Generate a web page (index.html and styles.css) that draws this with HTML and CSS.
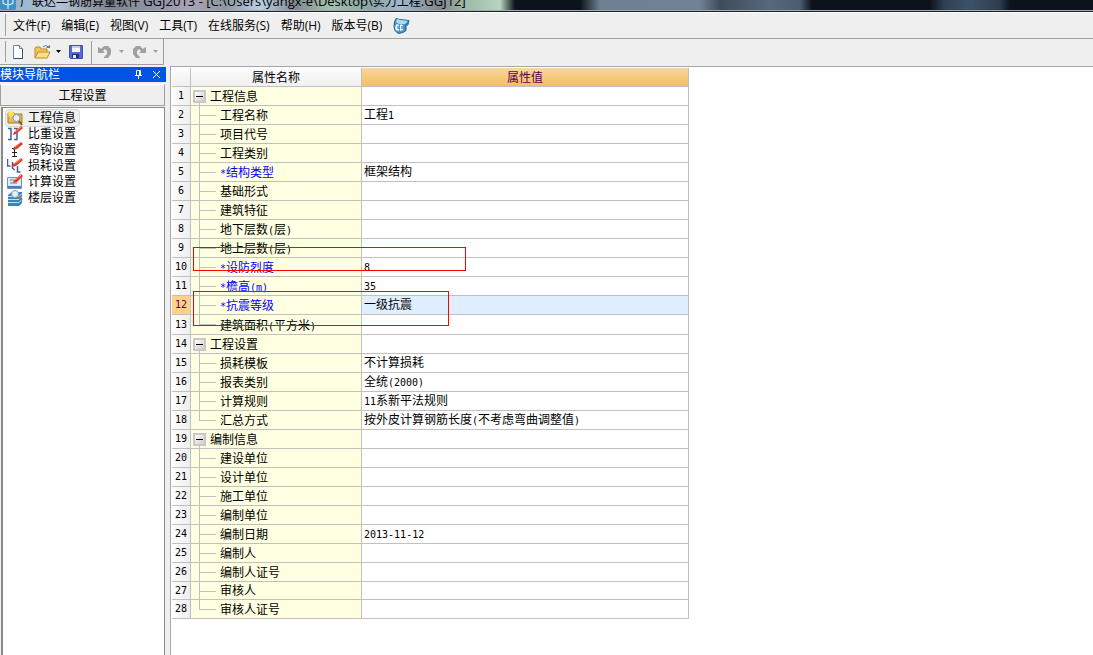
FILE: index.html
```html
<!DOCTYPE html>
<html lang="zh-CN">
<head>
<meta charset="utf-8">
<title>广联达—钢筋算量软件 GGJ2013</title>
<link rel="stylesheet" href="styles.css">
</head>
<body>
<div class="app">
  <header class="titlebar">
    <svg class="logo" width="16" height="16" viewBox="0 0 16 16"><rect width="16" height="16" rx="2" fill="#3d8fc4"/><path d="M8 1v14M3 5h10v4q-5 4-10 0z" fill="none" stroke="#d8f0fb" stroke-width="1.2"/></svg>
    <span class="caption">广联达—钢筋算量软件 <span class="latin">GGJ2013 - [C:\Users\yangx-e\Desktop\</span>实力工程<span class="latin">.GGJ12]</span></span>
  </header>
  <nav class="menubar">
    <button>文件(F)</button><button>编辑(E)</button><button>视图(V)</button><button>工具(T)</button><button>在线服务(S)</button><button>帮助(H)</button><button>版本号(B)</button>
    <button class="mascot" aria-label="在线助手"><svg width="17" height="17" viewBox="0 0 17 17"><path d="M1.500 5 3 1.500l4 1 9 1-1 4-2 2v4l-3 2-5 1-3-3-1-4z" fill="#4696cf" stroke="#23628f"/><path d="m4 2 4 1 7 1-3 3H6L3 5z" fill="#a9dcf2"/><path d="M3 7.500q2-1 3 1v5q-3 1-4-2zM7 8q2-2 3 1v4l-3 1z" fill="#eef6fa"/><path d="M5 9v3M9 9v3" stroke="#345a78"/><path d="M12.500 8v5M15 5l-3 4" stroke="#2a6fa6"/></svg></button>
  </nav>
  <div class="toolrow">
    <div class="toolbar">
      <button class="new" aria-label="新建"><svg width="16" height="16" viewBox="0 0 16 16"><path d="M3.500 1.500h6l3 3v10h-9z" fill="#fdfeff" stroke="#7085a5"/><path d="M12.500 5v9.500h-9" fill="none" stroke="#344e75"/><path d="M9.500 1.500v3h3" fill="#d6e2f1" stroke="#7085a5"/></svg></button>
      <button class="open" aria-label="打开"><svg width="17" height="16" viewBox="0 0 17 16"><path d="M1 14V4l1-1h4l1 2h6v3" fill="#f2c65a" stroke="#b98a26"/><path d="M1 14 4 8h12l-3 6z" fill="#fbe08a" stroke="#bd8c25"/><path d="M9 3q3-3 5 0" fill="none" stroke="#58769a"/><path d="M12 4h4V1z" fill="#58769a"/></svg></button>
      <button class="drop" aria-label="打开选项"><svg width="5" height="3"><path d="M0 0h5L2.500 3z"/></svg></button>
      <button class="save" aria-label="保存"><svg width="16" height="16" viewBox="0 0 16 16"><path d="M1.500 1.500h13v13h-12l-1-1z" fill="#5868d6" stroke="#4351b4"/><path d="M4 2h8v6H4z" fill="#f4f7ff"/><path d="M4 2h8v2H4z" fill="#c1ccf1"/><path d="M4 10h7v4H4z" fill="#28316e"/><path d="M5 11h3v3H5z" fill="#e9ecf9"/></svg></button>
      <span class="rule"></span>
      <button class="undo" aria-label="撤销"><svg width="14" height="14" viewBox="0 0 14 14"><path d="M0 2l2 1 1 1 3-3h4l3 3v5l-3 4H6v-1l3-3V6L7 4 5 6l2 2H0z" fill="#a0a0a0"/></svg></button>
      <button class="drop" aria-label="撤销选项"><svg width="5" height="3"><path d="M0 0h5L2.500 3z" fill="#a0a0a0"/></svg></button>
      <button class="redo" aria-label="重做"><svg width="14" height="14" viewBox="0 0 14 14"><path d="M14 2l-2 1-1 1-3-3H4L1 4v5l3 4h4v-1L5 9V6l2-2 2 2-2 2h7z" fill="#a0a0a0"/></svg></button>
      <button class="drop" aria-label="重做选项"><svg width="5" height="3"><path d="M0 0h5L2.500 3z" fill="#a0a0a0"/></svg></button>
    </div>
  </div>
  <div class="body">
    <aside class="side">
      <div class="sidehead"><h2>模块导航栏</h2>
        <button aria-label="固定"><svg width="9" height="9" viewBox="0 0 9 9"><path d="M2.500 5V.5h4V5M1 5.500h7M4.500 6v3M5.500 1v4" fill="none" stroke="#fff"/></svg></button>
        <button aria-label="关闭"><svg width="9" height="9" viewBox="0 0 9 9"><path d="m1 1 7 7M8 1 1 8" stroke="#fff"/></svg></button>
      </div>
      <button class="group">工程设置</button>
      <ul class="list">
        <li><a href="#info" class="current"><svg width="16" height="16" viewBox="0 0 16 16"><path d="M1 3h6l1 1h7v9H1z" fill="#efbd4b" stroke="#a77822"/><path d="m4 0 1 2 2-1-1 2 2 1-2 1 1 2-2-1-1 2-1-2-2 1 1-2-2-1 2-1-1-2 2 1z" fill="#ffe45c"/><circle cx="9.500" cy="8" r="3.500" fill="#e6f2fc" stroke="#8098b5"/><path d="m12 11 3 4" stroke="#74511c" stroke-width="2"/></svg>工程信息</a></li>
        <li><a href="#weight"><svg width="16" height="16" viewBox="0 0 16 16"><path d="M1 2.500h3v11H1M7 2.500h3v11H7" fill="none" stroke="#3d5f99" stroke-width="1.500"/><path d="m6 9 1-3 7-6 2 2-7 6z" fill="#df3b27"/><path d="m8 6 6-5" stroke="#ff9d7b"/></svg>比重设置</a></li>
        <li><a href="#hook"><svg width="16" height="16" viewBox="0 0 16 16"><path d="M5 6.500h5M7.500 6v9M5 10.500h5M5 14.500h5" stroke="#222"/><path d="m6 8 1-3 7-5 2 2-6 5z" fill="#df3b27"/><path d="m8 5 5-4" stroke="#ff9d7b"/></svg>弯钩设置</a></li>
        <li><a href="#loss"><svg width="16" height="16" viewBox="0 0 16 16"><path d="M.5 1v7h3M5.500 4v6l2 2M10.500 8v6h3" fill="none" stroke="#3d5f99" stroke-width="1.500"/><path d="m5 9 1-3 8-6 2 2-7 6z" fill="#df3b27"/><path d="m7 6 7-5" stroke="#ff9d7b"/></svg>损耗设置</a></li>
        <li><a href="#calc"><svg width="16" height="16" viewBox="0 0 16 16"><path d="M.5 3.500h14v11H.5z" fill="#dceafa" stroke="#6e94c7"/><path d="M1 13h13" stroke="#487cbd" stroke-width="2"/><path d="M3 6h4M3 9h7" stroke="#5f84b6"/><path d="m6 9 1-3 7-6 2 2-6 6z" fill="#df3b27"/><path d="m8 6 6-5" stroke="#ff9d7b"/></svg>计算设置</a></li>
        <li><a href="#floor"><svg width="16" height="16" viewBox="0 0 16 16"><path d="m1 5 4-3h10v11l-3 3H1z" fill="#3587c4"/><path d="M1 6.500h11l3-3M1 9.500h11l3-3M1 12.500h11l3-3" fill="none" stroke="#bce4f8"/><circle cx="8" cy="4" r="3.500" fill="#e8eff5" stroke="#8a9aac"/><path d="m11 7 4 3" stroke="#9c7337" stroke-width="2"/></svg>楼层设置</a></li>
      </ul>
    </aside>
    <main class="main">
      <table class="grid">
        <colgroup><col class="c-num"><col class="c-name"><col class="c-value"></colgroup>
        <thead><tr><th></th><th>属性名称</th><th class="active">属性值</th></tr></thead>
        <tbody>
          <tr class="sec"><th>1</th><td><button aria-label="折叠"></button>工程信息</td><td></td></tr>
          <tr><th>2</th><td>工程名称</td><td>工程<span class="half">1</span></td></tr>
          <tr><th>3</th><td>项目代号</td><td></td></tr>
          <tr><th>4</th><td>工程类别</td><td></td></tr>
          <tr class="key"><th>5</th><td><span class="half">*</span>结构类型</td><td>框架结构</td></tr>
          <tr><th>6</th><td>基础形式</td><td></td></tr>
          <tr><th>7</th><td>建筑特征</td><td></td></tr>
          <tr><th>8</th><td>地下层数<span class="half">(</span>层<span class="half">)</span></td><td></td></tr>
          <tr><th>9</th><td>地上层数<span class="half">(</span>层<span class="half">)</span></td><td></td></tr>
          <tr class="key"><th>10</th><td><span class="half">*</span>设防烈度</td><td><span class="half">8</span><i class="mark mark-a"></i></td></tr>
          <tr class="key"><th>11</th><td><span class="half">*</span>檐高<span class="half">(m)</span></td><td><span class="half">35</span></td></tr>
          <tr class="key selected"><th>12</th><td><span class="half">*</span>抗震等级</td><td>一级抗震<i class="mark mark-b"></i></td></tr>
          <tr class="last tall"><th>13</th><td>建筑面积<span class="half">(</span>平方米<span class="half">)</span></td><td></td></tr>
          <tr class="sec"><th>14</th><td><button aria-label="折叠"></button>工程设置</td><td></td></tr>
          <tr><th>15</th><td>损耗模板</td><td>不计算损耗</td></tr>
          <tr><th>16</th><td>报表类别</td><td>全统<span class="half">(2000)</span></td></tr>
          <tr><th>17</th><td>计算规则</td><td><span class="half">11</span>系新平法规则</td></tr>
          <tr class="last"><th>18</th><td>汇总方式</td><td>按外皮计算钢筋长度<span class="half">(</span>不考虑弯曲调整值<span class="half">)</span></td></tr>
          <tr class="sec"><th>19</th><td><button aria-label="折叠"></button>编制信息</td><td></td></tr>
          <tr><th>20</th><td>建设单位</td><td></td></tr>
          <tr><th>21</th><td>设计单位</td><td></td></tr>
          <tr><th>22</th><td>施工单位</td><td></td></tr>
          <tr><th>23</th><td>编制单位</td><td></td></tr>
          <tr><th>24</th><td>编制日期</td><td><span class="half">2013-11-12</span></td></tr>
          <tr><th>25</th><td>编制人</td><td></td></tr>
          <tr><th>26</th><td>编制人证号</td><td></td></tr>
          <tr class="short"><th>27</th><td>审核人</td><td></td></tr>
          <tr class="last"><th>28</th><td>审核人证号</td><td></td></tr>
        </tbody>
      </table>
    </main>
  </div>
</div>
</body>
</html>
```

FILE: styles.css
```css
* { box-sizing: border-box; }
body { margin: 0; background: #efefef; color: #000; font: 12px/16px "Open Sans", "Noto Sans CJK SC", sans-serif; }
button { margin: 0; padding: 0; border: 0; background: none; color: inherit; font: inherit; display: flex; align-items: center; justify-content: center; }
svg { display: block; flex: none; }
.app { min-height: 100vh; display: flex; flex-direction: column; }

.titlebar { height: 13px; display: flex; align-items: flex-end; gap: 4px; overflow: hidden; white-space: nowrap; padding-bottom: 2px;
  border-bottom: 1px solid #fff; box-shadow: inset 0 -1px #18222c, inset 0 -2px #a4abb0;
  background: linear-gradient(90deg, #8fb0c8 0, #b4c3d4 60px, #7f868e 110px, #8b92a4 150px, #a9a3b4 190px, #8e979f 225px, #b9cfe4 260px, #81898f 295px, #9fc2ad 330px, #8ea3a5 370px, #9fb9d0 400px, #80868b 440px, #9fb9a8 465px, #b6d4c0 500px, #0c131c 515px, #0c131c 580px, #6e8092 600px, #6f8295 700px, #3f4c5b 720px, #56687b 770px, #4b5c6e 800px, #0c131c 812px, #0c131c 930px, #2f4255 945px, #3d5268 970px, #2b3c4e 1000px, #0c131c 1010px); }
.latin { font-size: 13px; }

.menubar { height: 26px; display: flex; align-items: center; gap: 11px; padding-left: 13px; border-bottom: 1px solid #a0a0a0; background: linear-gradient(#a0a0a0, #a0a0a0) 5px 1px / 1px 22px no-repeat; }

.toolrow { height: 26px; display: flex; }
.toolbar { width: 164px; display: flex; align-items: center; padding-left: 10px; border-right: 1px solid #a0a0a0; border-bottom: 1px solid #a0a0a0; background: linear-gradient(#a0a0a0, #a0a0a0) 5px 2px / 1px 21px no-repeat; }
.open { margin-left: 8px; }
.open + .drop { margin: 0 7px 0 5px; }
.rule { align-self: stretch; width: 1px; margin: 2px 6px 0 7px; background: #a0a0a0; }
.undo + .drop { margin: 0 8px 0 7px; }
.redo + .drop { margin-left: 7px; }

.body { flex: 1; display: flex; gap: 4px; padding-top: 1px; }
.side { width: 166px; display: flex; flex-direction: column; margin-top: 1px; }
.sidehead { height: 15px; display: flex; align-items: center; gap: 9px; padding-right: 5px; background: #0054e3; color: #fff; }
.sidehead h2 { margin: 0 auto 0 0; font: inherit; line-height: 15px; }
.group { height: 22px; margin: 2px 1px 0 0; padding-top: 1px; border: 1px solid #a0a0a0; border-top-color: #fff; background: #efefef; }
.list { flex: 1; margin: 1px 1px 0; padding: 2px 0; list-style: none; border: solid #8a8a8a; border-width: 1px 1px 0 2px; background: #fff; }
.list a { display: flex; width: max-content; align-items: center; gap: 5px; height: 16px; margin-left: 3px; padding: 0 3px 0 1px; color: #000; text-decoration: none; border-radius: 3px; }
.list a.current { background: #f0f0f0; box-shadow: 0 0 0 1px #d9d9d9; }

.main { flex: 1; padding: 1px; border: solid #a6a6ae; border-width: 1px 0 0 1px; background: #fff; }
.grid { width: 517px; max-width: 100%; table-layout: fixed; border-spacing: 0; }
.c-num { width: 19px; }
.c-name { width: 171px; }
.grid th, .grid td { height: 19px; padding: 0; border: solid #c0c0c0; border-width: 0 1px 1px 0; line-height: 16px; font-weight: 400; text-align: left; white-space: nowrap; }
.grid thead th { padding-top: 2px; text-align: center; background: linear-gradient(#fdfdfd, #f0f0f0); }
.grid thead .active { color: #5a0050; background: linear-gradient(#fad79c, #f1c15d); }
.grid tbody th { text-align: center; font: 10px/16px "DejaVu Sans Mono", monospace; background: linear-gradient(90deg, #fdfdfd, #efefef); }
.grid td:nth-child(2) { position: relative; padding: 2px 0 0 29px; background: #ffffe1; }
.grid td:nth-child(3) { position: relative; padding-left: 2px; }
.grid .tall > * { height: 20px; }
.grid .short > * { height: 18px; }
.grid .short td:nth-child(2) { padding-top: 1px; }
.grid .key td:nth-child(2) { color: #00f; }
.grid .selected th { color: #5a0050; background: #ffd08a; }
.grid .selected td:nth-child(3) { background: #e0efff; }
.half { font: 10px/10px "DejaVu Sans Mono", monospace; }

/* Tree branches */
.grid td:nth-child(2)::before { content: ""; position: absolute; left: 8px; top: 0; bottom: -1px; width: 1px; background: #c0c0c0; }
.grid td:nth-child(2)::after { content: ""; position: absolute; left: 9px; top: 9px; width: 16px; height: 1px; background: #c0c0c0; }
.grid .last td:nth-child(2)::before { bottom: auto; height: 10px; }
.grid .sec td:nth-child(2) { padding-left: 19px; }
.grid .sec td:nth-child(2)::before { top: 16px; }
.grid .sec td:nth-child(2)::after { content: none; }
.grid td button { position: absolute; left: 2px; top: 3px; width: 13px; height: 13px; border: 2px solid #c8c8c8; background: linear-gradient(#000, #000) center / 7px 1px no-repeat, linear-gradient(135deg, #fff, #ccc); }

/* Review outlines */
.mark { position: absolute; z-index: 2; border: 1px solid #f00; pointer-events: none; }
.mark-a { left: -169px; top: -11px; width: 273px; height: 24px; }
.mark-b { left: -169px; top: -5px; width: 256px; height: 35px; }
```
